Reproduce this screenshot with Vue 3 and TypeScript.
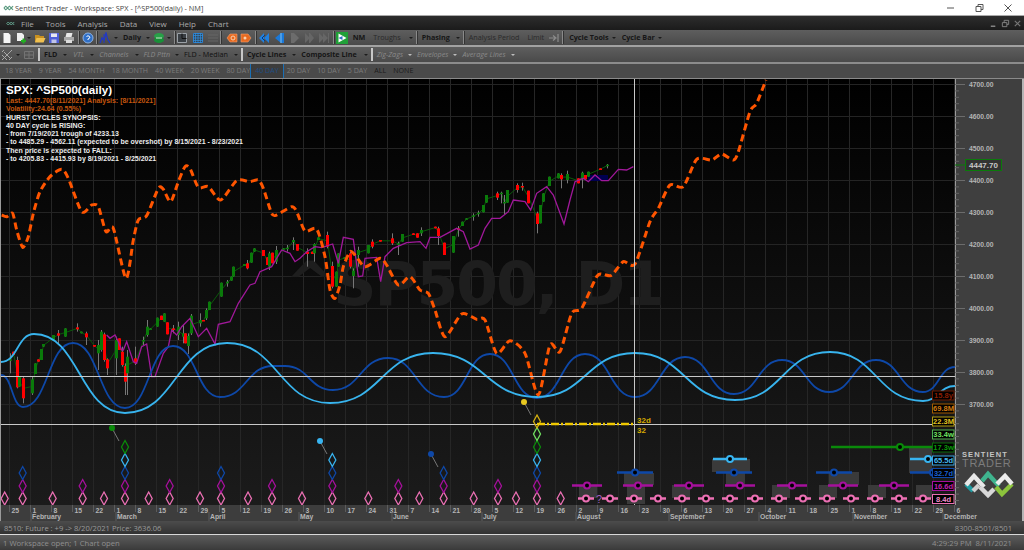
<template>
  <div class="app">
    <div class="titlebar">
      <svg class="logo-small" viewBox="0 0 12 8"><path d="M1 4 3 2 5 4 7 2 9 4 11 2M1 4 3 6 5 4 7 6 9 4 11 6" fill="none" stroke="#5a9a80" stroke-width="1.2"/></svg>
      <span class="title">Sentient Trader - Workspace: SPX - [^SP500(daily) - NM]</span>
      <div class="win-btns">
        <svg viewBox="0 0 10 10"><path d="M2 5h7" stroke="#555" stroke-width="1"/></svg>
        <svg viewBox="0 0 10 10"><path d="M2 3.5h5v5h-5zM4 3.5v-2h5v5h-2" fill="none" stroke="#555"/></svg>
        <svg viewBox="0 0 10 10"><path d="M1.5 1.5l7 7M8.5 1.5l-7 7" stroke="#555"/></svg>
      </div>
    </div>

    <div class="menubar">
      <svg class="menu-logo" viewBox="0 0 12 8"><path d="M1 4 3 2 5 4 7 2 9 4 11 2M1 4 3 6 5 4 7 6 9 4 11 6" fill="none" stroke="#6fb8a0" stroke-width="1.1"/></svg>
      <span v-for="m in menus" :key="m" class="menu-item">{{ m }}</span>
      <div class="mdi-btns">
        <svg viewBox="0 0 10 10"><path d="M2 8h5" stroke="#999" stroke-width="1.4"/></svg>
        <svg viewBox="0 0 10 10"><path d="M1.5 4h5v4.500h-5zM3.500 4v-2.500h5v4.500h-2" fill="none" stroke="#888"/></svg>
        <svg viewBox="0 0 10 10"><path d="M2 2l6 6M8 2l-6 6" stroke="#777" stroke-width="1.3"/></svg>
      </div>
    </div>

    <div class="toolbar t1">
      <template v-for="(it, i) in bar1" :key="i">
        <span v-if="it.t === 'sep'" class="sep" :style="{ marginLeft: it.l + 'px' }"></span>
        <span v-else-if="it.t === 'dd'" class="dd" :style="{ marginLeft: it.l + 'px' }"></span>
        <svg v-else-if="it.t === 'ic'" class="ic" :style="{ marginLeft: it.l + 'px' }" viewBox="0 0 12 12" v-html="icons[it.n!]"></svg>
        <span v-else class="lbl" :class="it.c" :style="{ marginLeft: it.l + 'px' }">{{ it.n }}</span>
      </template>
    </div>

    <div class="toolbar t2">
      <template v-for="(it, i) in bar2" :key="i">
        <span v-if="it.t === 'sep'" class="sep light" :style="{ marginLeft: it.l + 'px' }"></span>
        <span v-else-if="it.t === 'dd'" class="dd" :class="it.c" :style="{ marginLeft: it.l + 'px' }"></span>
        <svg v-else-if="it.t === 'ic'" class="ic" :style="{ marginLeft: it.l + 'px' }" viewBox="0 0 12 12" v-html="icons[it.n!]"></svg>
        <span v-else class="lbl" :class="it.c" :style="{ marginLeft: it.l + 'px' }">{{ it.n }}</span>
      </template>
    </div>

    <div class="toolbar t3">
      <span v-for="c in cycles" :key="c" class="cycle" :class="{ active: c === '40 DAY', on: c === 'ALL' || c === 'NONE' }">{{ c }}</span>
    </div>

    <div class="chart">
      <svg class="plot" width="1024" height="442" viewBox="0 79 1024 442">
        <defs>
          <linearGradient id="bg" x1="0" y1="0" x2="0" y2="1">
            <stop offset="0" stop-color="#000" />
            <stop offset="1" stop-color="#1b1b1b" />
          </linearGradient>
        </defs>
        <rect x="0" y="79" width="955" height="426" fill="url(#bg)" />

        <path v-for="k in weeks" :key="'g' + k.x" :d="`M${k.x} 79V505`" stroke="#262626" stroke-width="1" />
        <path v-for="p in prices" :key="'h' + p.v" :d="`M1 ${p.y}H955`" stroke="#242424" stroke-width="1" />

        <text x="285" y="305" class="watermark" textLength="380" lengthAdjust="spacing">^SP500, D1</text>

        <polyline :points="closeLine" fill="none" stroke="#0a5a0a" stroke-width="1" />
        <rect x="588" y="175" width="20" height="6" fill="#000050" />
        <g v-for="(c, i) in candles" :key="'c' + i">
          <path :d="`M${c.x} ${c.wt}V${c.wb}`" stroke="#777" stroke-width="1" />
          <rect :x="c.x - 1.5" :y="c.t" width="3" :height="c.h" :fill="c.fill" />
        </g>

        <polyline :points="purple" fill="none" stroke="#a0189a" stroke-width="1.3" />

        <path :d="darkWave" fill="none" stroke="#0e48a8" stroke-width="1.8" />
        <path :d="lightWave" fill="none" stroke="#38b4ee" stroke-width="1.8" />
        <path :d="orange" fill="none" stroke="#ff5500" stroke-width="3" stroke-dasharray="7 4" />

        <path d="M634.500 79V505" stroke="#c8c8c8" stroke-width="1" />
        <path d="M1 376.500H955M1 424.500H959" stroke="#c8c8c8" stroke-width="1" />

        <!-- past troughs -->
        <path v-for="(d, i) in diamonds" :key="'d' + i" :d="`M${d.x} ${d.y - 6.5}L${d.x + 3.5} ${d.y}L${d.x} ${d.y + 6.5}L${d.x - 3.5} ${d.y}Z`" fill="none" :stroke="d.col" stroke-width="1.3" />
        <g v-for="p in pins" :key="'p' + p.x">
          <path :d="`M${p.x + 1} ${p.y + 2}L${p.x + 7} ${p.y + 13}`" stroke="#777" stroke-width="1" />
          <circle :cx="p.x" :cy="p.y" r="3" :fill="p.col" />
        </g>

        <path d="M537 424H634" stroke="#f0c800" stroke-width="2.500" stroke-dasharray="8 2 2 2" />
        <text x="637" y="423" class="y-lbl">32d</text>
        <text x="637" y="433" class="y-lbl">32</text>

        <!-- future bands -->
        <rect v-for="(b, i) in bands" :key="'b' + i" :x="b[0]" :y="b[1]" :width="b[2]" :height="b[3]" fill="#3a3a3a" />
        <g v-for="(m, i) in markers" :key="'m' + i">
          <path :d="`M${m.x - m.w} ${m.y}H${m.x + m.w}`" :stroke="m.col" stroke-width="2.500" />
          <circle :cx="m.x" :cy="m.y" r="3" fill="#000" :stroke="m.col" stroke-width="2" />
        </g>
        <text x="596" y="503" class="qm">?</text>

        <!-- price axis -->
        <rect x="955" y="79" width="67" height="442" fill="#3f3f3f" />
        <rect x="1022" y="79" width="2" height="442" fill="#b5b5b5" />
        <path d="M955.500 79V505" stroke="#9a9a9a" stroke-width="1" />
        <path d="M0.500 79V521" stroke="#9a9a9a" stroke-width="1" />
        <path v-for="t in minorTicks" :key="'t' + t" :d="`M955 ${t}H959`" stroke="#666" stroke-width="1" />
        <g v-for="p in prices" :key="'a' + p.v">
          <path :d="`M955 ${p.y}H965`" stroke="#6c6c6c" stroke-width="1" />
          <text x="969" :y="p.y + 2.5" class="ax">{{ p.v }}.00</text>
        </g>
        <path d="M955 165H965" stroke="#0a7a0a" stroke-width="1" />
        <rect x="965.500" y="159.500" width="36" height="11" fill="#333" stroke="#0a7a0a" />
        <text x="969" y="168" class="last">4447.70</text>

        <!-- cycle tags -->
        <g v-for="t in tags" :key="t.s">
          <rect x="932.500" :y="t.y + 0.5" width="21.500" height="9" fill="#000" :stroke="t.b" stroke-width="1" />
          <text x="943.500" :y="t.y + 7.5" text-anchor="middle" class="tag" :fill="t.c">{{ t.s }}</text>
        </g>

        <!-- logo -->
        <text x="962" y="456.500" class="logo-a">SENTIENT</text>
        <text x="962" y="467" class="logo-b">TRADER</text>
        <g fill="none" stroke-width="4.500" stroke-linejoin="miter">
          <path d="M966 484l7 7" stroke="#1e9aa0" />
          <path d="M966 485l8-9 10 11" stroke="#e8e8e8" />
          <path d="M973 491l6-6" stroke="#cfcfcf" />
          <path d="M980 487l8 8 6-6" stroke="#d8d8d8" />
          <path d="M982 481l6-7 11 12" stroke="#3fb48e" />
          <path d="M996 487l6 7 10-10" stroke="#8cc43c" />
          <path d="M997 484l8-8 7 8" stroke="#ececec" />
        </g>

        <!-- time axis -->
        <rect x="1" y="505" width="954" height="16" fill="#3d3d3d" />
        <g v-for="k in weeks" :key="'w' + k.x">
          <path :d="`M${k.x} 505V512`" stroke="#5c5c5c" stroke-width="1" />
          <text :x="k.x + 2" y="512.500" class="ax">{{ k.s }}</text>
        </g>
        <g v-for="m in months" :key="m.s">
          <path :d="`M${m.x - 1} 512V521`" stroke="#5c5c5c" stroke-width="1" />
          <text :x="m.x" y="519" class="ax">{{ m.s }}</text>
        </g>
      </svg>

      <div class="synopsis">
        <div class="head">SPX: ^SP500(daily)</div>
        <div class="warn first">Last: 4447.70[8/11/2021] Analysis: [8/11/2021]</div>
        <div class="warn">Volatility:24.64 (0.55%)</div>
        <div>HURST CYCLES SYNOPSIS:</div>
        <div>40 DAY cycle is RISING:</div>
        <div>- from 7/19/2021 trough of 4233.13</div>
        <div>- to 4485.29 - 4562.11 (expected to be overshot) by 8/15/2021 - 8/23/2021</div>
        <div>Then price is expected to FALL:</div>
        <div>- to 4205.83 - 4415.93 by 8/19/2021 - 8/25/2021</div>
      </div>
    </div>

    <div class="docstatus">
      <span>8510: Future : +9 -&gt; 8/20/2021 Price: 3636.06</span>
      <span>8300-8501/8501</span>
    </div>
    <div class="statusbar">
      <span>1 Workspace open; 1 Chart open</span>
      <span>4:29:29 PM&nbsp; 8/11/2021</span>
    </div>
  </div>
</template>

<script setup lang="ts">
interface BarItem {
  t: 'sep' | 'dd' | 'ic' | 'lbl'
  n?: string
  c?: string
  l?: number
}

const menus = ['File', 'Tools', 'Analysis', 'Data', 'View', 'Help', 'Chart']

const icons: Record<string, string> = {
  doc: '<path d="M2.500 1h5l2 2v8h-7z" fill="#f4f4f4"/>',
  newc: '<path d="M2 1h5l2 2v6h-7z" fill="#f0f0f0"/><path d="M8.500 6.500v5M6 9h5" stroke="#22b022" stroke-width="2"/>',
  open: '<path d="M1 3h4l1 1h4v6h-9z" fill="#c89020"/><path d="M2.500 6h9l-2 4.500h-8.500z" fill="#f0c050"/>',
  save: '<path d="M1 1h10v10h-10z" fill="#5060d8"/><path d="M3 1.500h6v3.500h-6z" fill="#e8e8f0"/><path d="M3.500 7.500h5v3.500h-5z" fill="#c0c4e8"/>',
  print: '<path d="M3.500 1h6l-1 4h-6z" fill="#e8e8e8"/><path d="M1 5h10v4h-10z" fill="#a8a8a8"/><path d="M3 8h6v3h-6z" fill="#dcdcdc"/>',
  help: '<circle cx="6" cy="6" r="5" fill="#3070c8" stroke="#8fb4e4" stroke-width="1"/><path d="M4.500 4.500q1.500-1.500 3 0t-1.500 2.500v1" fill="none" stroke="#fff" stroke-width="1"/>',
  wave: '<path d="M1 11l2-5 2 2 2-7 1.500 6 2.500 4" fill="none" stroke="#2038c8" stroke-width="1.300"/><path d="M5 2v9" stroke="#2038c8"/>',
  sync: '<ellipse cx="6" cy="4" rx="5" ry="3" fill="#28a048"/><ellipse cx="6" cy="8" rx="5" ry="3" fill="#189038"/><path d="M3 6h6" stroke="#d0f0d0"/>',
  box: '<path d="M1.500 1.500h9v9h-9z" fill="#3a3f44" stroke="#9aa0a6"/><path d="M6 1.500v5h4.500" fill="none" stroke="#111"/>',
  grid: '<path d="M1.500 1.500h9v9h-9z" fill="#345" stroke="#2a80d0"/><path d="M6 1v10M1 6h10M3.500 1v10M8.500 1v10M1 3.500h10M1 8.500h10" stroke="#3090e0" stroke-width=".7"/>',
  lines: '<path d="M1 3h10M1 6h10M1 9h10" stroke="#666"/>',
  ora1: '<path d="M1 6l3-4h7v8h-7z" fill="#e86a20" stroke="#f0a070" stroke-width=".6"/><circle cx="7" cy="6" r="2" fill="none" stroke="#f8d0b0"/>',
  ora2: '<path d="M11 6l-3-4h-7v8h7z" fill="#e86a20" stroke="#f0a070" stroke-width=".6"/><circle cx="5" cy="6" r="1.500" fill="#f8d0b0"/>',
  blueL: '<path d="M6 1l-5 5 5 5zM11 1l-5 5 5 5z" fill="#2080e0"/><path d="M7 3l-3 3 3 3" fill="none" stroke="#0a3a78"/>',
  blueM: '<path d="M8 1l-6 5 6 5h3v-10z" fill="#1a78d8"/><path d="M8 1v10" stroke="#7fc0f0"/>',
  gr1: '<path d="M2 1h3l5 5-5 5h-3z" fill="#6c6c6c"/>',
  gr2: '<path d="M2 1l5 5-5 5zM6 1h1l4 5-4 5h-1z" fill="#666"/>',
  gr3: '<path d="M1 1l5 5-5 5zM5 1l5 5-5 5z" fill="#666"/><path d="M10.500 1v10" stroke="#666"/>',
  nm: '<path d="M0 0h12v12h-12z" fill="#20a038"/><path d="M2.500 1.500l8 4.500-8 4.500z" fill="#fff"/><path d="M2.500 6l4-2v4z" fill="#3070c0"/>',
  limit: '<path d="M1 6h6M5 3.500l3 2.500-3 2.500M10 2v8" fill="none" stroke="#8c8c8c" stroke-width="1.200"/>',
  axes: '<path d="M1 11l10-10M1 6l5 5M3 3l7 7M1 3l2-2M8 11l3-3" stroke="#a8a8a8" stroke-width="1"/>',
  panel: '<path d="M1.500 2.500h9v7h-9zM1.500 6h9M6 2.500v7" fill="none" stroke="#747474"/>'
}

const ic = (n: string, l = 0): BarItem => ({ t: 'ic', n, l })
const dd = (l = 0, c = ''): BarItem => ({ t: 'dd', l, c })
const sep = (l = 0): BarItem => ({ t: 'sep', l })
const lbl = (n: string, c: string, l = 0): BarItem => ({ t: 'lbl', n, c, l })

const bar1: BarItem[] = [
  ic('doc', 1), ic('newc', 2), dd(0), ic('open', 3), ic('save', 2), ic('print', 3), sep(3), ic('help', 2), sep(2),
  ic('wave', 1), dd(3), lbl('Daily', 'bold', 5), dd(4.5), ic('sync', 3), dd(2), sep(3), ic('box', 0), ic('grid', 4), ic('lines', 3), sep(1),
  ic('ora1', 4), ic('ora2', 2), sep(3), ic('blueL', 1), ic('blueM', 3), ic('gr1', 4), ic('gr2', 2), ic('gr3', 3), sep(3),
  ic('nm', 1), lbl('NM', 'bold', 5), lbl('Troughs', 'dim', 8), dd(8), sep(3), lbl('Phasing', 'bold', 4), dd(6), sep(3),
  lbl('Analysis Period', 'dim', 4), lbl('Limit', 'dim', 8), ic('limit', 4), sep(2), lbl('Cycle Tools', 'bold', 5), dd(3), lbl('Cycle Bar', 'bold', 6), dd(3)
]

const bar2: BarItem[] = [
  ic('axes', 1), dd(3), ic('panel', 3), sep(3), lbl('FLD', 'bold', 4), dd(6), lbl('VTL', 'ital', 6), dd(6), lbl('Channels', 'ital', 5), dd(6),
  lbl('FLD Pttn', 'ital', 5), dd(5), lbl('FLD - Median', 'mid', 5), dd(6), sep(3), lbl('Cycle Lines', 'bold', 4), dd(6), lbl('Composite Line', 'bold', 5), dd(7), sep(3),
  lbl('Zig-Zags', 'ital', 4), dd(5, 'pale'), lbl('Envelopes', 'ital', 5), dd(5, 'pale'), lbl('Average Lines', 'ital', 5), dd(5, 'pale')
]

const cycles = ['18 YEAR', '9 YEAR', '54 MONTH', '18 MONTH', '40 WEEK', '20 WEEK', '80 DAY', '40 DAY', '20 DAY', '10 DAY', '5 DAY', 'ALL', 'NONE']

const weekLabels = [25, 1, 8, 15, 22, 1, 8, 15, 22, 29, 5, 12, 19, 26, 3, 10, 17, 24, 31, 7, 14, 21, 28, 5, 12, 19, 26, 2, 9, 16, 23, 30, 6, 13, 20, 27, 4, 11, 18, 25, 1, 8, 15, 22, 29, 6]
const weeks = weekLabels.map((s, i) => ({ s, x: 9.5 + 21 * i }))

const months = [
  { s: 'February', x: 32 }, { s: 'March', x: 117 }, { s: 'April', x: 210 }, { s: 'May', x: 300 }, { s: 'June', x: 393 }, { s: 'July', x: 483 },
  { s: 'August', x: 577 }, { s: 'September', x: 670 }, { s: 'October', x: 760 }, { s: 'November', x: 854 }, { s: 'December', x: 944 }
]

const prices = Array.from({ length: 11 }, (_, i) => ({ v: 4700 - i * 100, y: 84.5 + i * 32 }))
const minorTicks = Array.from({ length: 66 }, (_, i) => 84.5 + i * 6.4)

// zoomed coords of the two chart crops back to screen px
const fromA = (p: number[]) => [p[0] / 3, 150 + p[1] / 3]
const fromB = (p: number[]) => [340 + p[0] / 3, 150 + p[1] / 3]
const fromC = (p: number[]) => [640 + p[0] / 3, 80 + p[1] / 3]

const orangePts = [
  ...[[5, 195], [20, 200], [38, 190], [50, 240], [68, 292], [85, 260], [100, 190], [120, 125], [150, 80], [185, 58], [205, 85], [245, 185], [275, 165], [295, 170], [318, 245], [340, 235], [378, 385], [400, 270], [415, 210], [440, 197], [475, 115], [490, 118], [512, 155], [535, 95], [555, 50], [570, 55], [595, 112], [625, 110], [662, 150], [710, 92], [750, 95], [775, 90], [790, 115], [815, 190], [830, 195], [875, 170], [890, 185], [915, 243], [950, 237], [975, 320], [990, 420], [1005, 445]].map(fromA),
  ...[[0, 405], [10, 350], [30, 305], [45, 315], [75, 350], [120, 325], [140, 345], [175, 405], [210, 380], [240, 420], [265, 430], [285, 480], [315, 560], [365, 492], [410, 508], [435, 510], [470, 610], [510, 572], [555, 610], [595, 735], [630, 585], [660, 605], [695, 490], [725, 475], [770, 380], [790, 373], [815, 376], [850, 335], [885, 342]].map(fromB),
  ...[[30, 425], [55, 385], [90, 315], [130, 320], [170, 238], [215, 240], [245, 222], [280, 240], [295, 215], [330, 95], [350, 70], [378, 0]].map(fromC)
]

function smooth(pts: number[][]): string {
  let d = `M${pts[0][0]} ${pts[0][1]}`
  for (let i = 0; i < pts.length - 1; i++) {
    const p0 = pts[i - 1] || pts[i]
    const p1 = pts[i]
    const p2 = pts[i + 1]
    const p3 = pts[i + 2] || p2
    d += `C${p1[0] + (p2[0] - p0[0]) / 8} ${p1[1] + (p2[1] - p0[1]) / 8} ${p2[0] - (p3[0] - p1[0]) / 8} ${p2[1] - (p3[1] - p1[1]) / 8} ${p2[0]} ${p2[1]}`
  }
  return d
}

// sine-like wave through its highs and lows
function wave(pts: number[][]): string {
  let d = `M${pts[0][0]} ${pts[0][1]}`
  for (let i = 0; i < pts.length - 1; i++) {
    const [x0, y0] = pts[i]
    const [x1, y1] = pts[i + 1]
    const mx = (x0 + x1) / 2
    d += `C${mx} ${y0} ${mx} ${y1} ${x1} ${y1}`
  }
  return d
}

const orange = smooth(orangePts)
const lightWave = wave([[1, 362], [34, 334], [125, 413], [227, 343], [330, 403], [433, 353], [537, 397], [635, 353], [735, 400], [830, 352], [923, 401], [955, 386]])
const darkWave = wave([[1, 375], [23, 407], [73, 343], [125, 408], [173, 346], [220, 397], [273, 366], [285, 366], [333, 390], [388, 358], [444, 397], [490, 354], [537, 398], [585, 354], [635, 397], [685, 357], [734, 394], [782, 360], [829, 392], [876, 360], [923, 392], [955, 367]])

const toPoints = (a: number[][]) => a.map(p => `${p[0]},${p[1]}`).join(' ')

const purple = toPoints([
  ...[[320, 555], [330, 565], [345, 555], [355, 575], [365, 600], [370, 600], [380, 575], [400, 635], [410, 640], [425, 590], [440, 582], [455, 680], [465, 680], [490, 610], [505, 590], [515, 540], [530, 555], [545, 530], [570, 505], [595, 560], [620, 535], [645, 582], [655, 523], [690, 515], [715, 460], [750, 405], [765, 400], [780, 365], [815, 350], [845, 300], [870, 310], [885, 335], [900, 325], [920, 305], [945, 290], [965, 293], [998, 282], [1015, 340]].map(fromA),
  ...[[10, 262], [40, 268], [55, 380], [68, 378], [75, 325], [110, 322], [122, 395], [135, 320], [160, 295], [200, 278], [240, 275], [258, 295], [270, 262], [300, 262], [350, 235], [370, 245], [390, 297], [415, 285], [435, 235], [455, 205], [480, 205], [505, 185], [520, 150], [555, 155], [572, 180], [590, 130], [620, 110], [640, 135], [672, 222], [690, 150], [705, 95], [730, 85], [745, 95], [765, 75], [785, 92], [805, 92], [835, 58], [860, 60], [880, 50]].map(fromB)
])

// x, body top, body bottom, colour (1 green, 0 red), wick top, wick bottom
type Row = [number, number, number, number, number?, number?]
const rowsA: Row[] = [
  [30, 628, 632, 1, 610, 670], [40, 605, 615, 0], [50, 630, 712, 0, 620, 715], [58, 680, 710, 1], [68, 685, 745, 0, 680, 760], [95, 688, 730, 1, 680, 735], [104, 640, 672, 1], [113, 628, 635, 0], [122, 597, 630, 1], [130, 582, 590, 1], [158, 555, 572, 1], [175, 550, 557, 0, 540, 585], [195, 535, 560, 1], [232, 532, 538, 0, 520, 545], [243, 545, 550, 1], [258, 550, 562, 0, 545, 585], [283, 585, 590, 0], [293, 585, 610, 1, 570, 660], [303, 545, 600, 1, 540, 605], [312, 553, 630, 0, 548, 635], [322, 628, 655, 0, 625, 675], [348, 570, 625, 1, 560, 675], [356, 565, 600, 0], [365, 605, 645, 0, 590, 650], [375, 648, 695, 0, 640, 735], [382, 620, 670, 1, 600, 735], [405, 625, 640, 0, 590, 645], [430, 570, 575, 1, 560, 585], [440, 530, 555, 1, 510, 560], [450, 535, 540, 1], [472, 503, 530, 1], [483, 497, 510, 0], [492, 490, 515, 1], [502, 517, 553, 0], [520, 535, 540, 0, 525, 550], [535, 530, 555, 1, 515, 570], [548, 550, 560, 1, 525, 580], [556, 550, 580, 0], [563, 558, 588, 1, 550, 612], [573, 497, 550, 1, 492, 555], [600, 510, 520, 1, 490, 530], [608, 510, 513, 0], [618, 480, 505, 1, 475, 510], [627, 455, 480, 1], [662, 398, 440, 1], [682, 395, 400, 1, 390, 410], [692, 380, 392, 1], [700, 350, 380, 1], [733, 342, 348, 1], [742, 340, 355, 0, 330, 358], [752, 308, 338, 1], [763, 295, 305, 1], [790, 300, 318, 0], [800, 322, 345, 0], [808, 310, 350, 1, 305, 360], [817, 308, 340, 0], [827, 300, 335, 1, 288, 342], [850, 295, 298, 1], [860, 293, 296, 1, 285, 305], [880, 270, 276, 1, 262, 300], [890, 282, 302, 0], [922, 305, 312, 0, 295, 350], [935, 305, 312, 0], [943, 282, 310, 1, 280, 335], [955, 262, 270, 1], [980, 255, 290, 0, 245, 295], [997, 348, 410, 0, 335, 415], [1007, 365, 410, 1], [1015, 310, 350, 1]
]
const rowsB: Row[] = [
  [12, 322, 326, 1], [30, 310, 350, 0, 305, 355], [40, 362, 378, 1, 355, 415], [55, 300, 315, 1, 290, 350], [85, 285, 310, 1], [95, 275, 290, 0, 268, 295], [120, 270, 275, 0], [157, 265, 280, 0, 250, 285], [175, 280, 285, 1, 275, 315], [185, 252, 275, 1], [220, 250, 255, 0], [230, 250, 263, 0], [243, 240, 250, 1, 232, 258], [285, 230, 235, 0], [295, 235, 258, 0, 230, 285], [312, 278, 315, 0], [340, 258, 308, 1], [355, 235, 240, 0, 228, 260], [365, 215, 228, 1], [378, 205, 208, 1], [400, 196, 200, 1, 190, 212], [415, 188, 192, 1, 182, 200], [428, 165, 187, 1], [438, 135, 158, 1], [472, 130, 143, 0, 125, 150], [482, 128, 132, 1, 125, 160], [491, 156, 160, 1, 135, 192], [502, 120, 158, 1], [530, 105, 120, 0, 100, 128], [545, 108, 112, 0, 98, 122], [565, 122, 160, 0], [590, 190, 222, 0, 185, 250], [600, 165, 220, 1], [610, 130, 155, 1], [628, 80, 108, 1], [655, 70, 85, 1], [662, 75, 88, 0, 70, 115], [682, 72, 90, 1, 62, 100], [715, 85, 100, 0], [725, 68, 88, 1, 65, 115], [735, 75, 88, 0], [745, 65, 80, 1], [780, 55, 60, 0], [800, 44, 48, 1, 42, 55]
]

const candles = [
  ...rowsA.map(r => mapCandle(r, fromA)),
  ...rowsB.map(r => mapCandle(r, fromB))
]

function mapCandle(r: Row, f: (p: number[]) => number[]) {
  const [x, t] = f([r[0], r[1]])
  const b = f([r[0], r[2]])[1]
  return {
    x: Math.round(x) + 0.5,
    t,
    h: Math.max(b - t, 1.5),
    fill: r[3] ? '#0a7a0a' : '#ff0000',
    wt: r[4] !== undefined ? f([0, r[4]])[1] : t,
    wb: r[5] !== undefined ? f([0, r[5]])[1] : b
  }
}

const closeLine = toPoints(candles.slice().sort((a, b) => a.x - b.x).map(c => [c.x, c.t + c.h / 2]))

const PINK = '#ec70b4'
const PURP = '#a6109c'
const DBLUE = '#0e48a8'
const LBLUE = '#38b4f0'
const GREEN = '#0a8a0a'
const LIME = '#70e060'
const YEL = '#d4b010'

const row = (xs: number[], y: number, col: string) => xs.map(x => ({ x, y, col }))
const xA = (zs: number[]) => zs.map(z => z / 3)
const xB = (zs: number[]) => zs.map(z => 340 + z / 3)

const diamonds = [
  ...row([...xA([14, 68, 158, 248, 312, 375, 446, 509, 600, 663, 744, 816, 906, 997]), ...xB([85, 175, 238, 311, 401, 474, 528, 591, 662])], 498.5, PINK),
  ...row([...xA([68, 248, 375, 509, 663, 816, 997]), ...xB([175, 311, 474, 591])], 486, PURP),
  ...row([...xA([68, 375, 663, 997]), ...xB([311, 591])], 473, DBLUE),
  ...row([...xA([375, 997]), ...xB([591])], 460, LBLUE),
  ...row([...xA([375]), ...xB([591])], 447, GREEN),
  ...row(xB([591]), 434, LIME),
  ...row(xB([591]), 421.5, YEL)
]

const pins = [
  { x: 112, y: 428, col: '#0a8a0a' },
  { x: 320, y: 441, col: '#38b4f0' },
  { x: 431, y: 454, col: '#0e48a8' },
  { x: 524, y: 402, col: '#e8c820' }
]

const bands = [
  [579, 485, 18, 13], [624, 473, 30, 12], [627, 485, 18, 19], [712, 459, 38, 13], [726, 472, 19, 13], [672, 485, 18, 13], [772, 485, 18, 13],
  [829, 472, 30, 13], [819, 485, 18, 13], [868, 485, 18, 13], [916, 485, 16, 13], [909, 448, 23, 25]
]

const markers = [
  ...[586, 610, 634, 658, 682, 706, 730, 755, 779, 803, 827, 851, 875, 899, 923].map(x => ({ x, y: 498.5, w: 8, col: PINK })),
  ...[587, 638, 689, 740, 792, 843, 894].map(x => ({ x, y: 485.5, w: 15, col: PURP })),
  ...[635, 734, 834].map(x => ({ x, y: 472.5, w: 18, col: DBLUE })),
  { x: 933, y: 472.5, w: 23, col: DBLUE },
  { x: 730, y: 459, w: 17, col: LBLUE },
  { x: 928, y: 459, w: 18, col: LBLUE },
  { x: 900, y: 447, w: 69, col: GREEN }
]

const tags = [
  { s: '15.8y', y: 390.5, b: '#6a1a00', c: '#8a1e00' },
  { s: '69.8M', y: 403.5, b: '#a05a00', c: '#d07a10' },
  { s: '22.3M', y: 416.5, b: '#b09a10', c: '#e0c020' },
  { s: '33.4w', y: 429.5, b: '#50b050', c: '#70e060' },
  { s: '17.3w', y: 442.5, b: '#0a6a0a', c: '#0a9a0a' },
  { s: '65.5d', y: 455.5, b: '#38a4e0', c: '#48bcf4' },
  { s: '32.7d', y: 468, b: '#0e48a8', c: '#1a60d0' },
  { s: '16.6d', y: 481, b: '#a6109c', c: '#c020b0' },
  { s: '8.4d', y: 494, b: '#ec70b4', c: '#f090c8' }
]
</script>

<style>
html,
body {
  margin: 0;
  background: #000;
}
</style>

<style scoped>
.app {
  width: 1024px;
  height: 550px;
  display: flex;
  flex-direction: column;
  overflow: hidden;
  font-family: "Open Sans", "Liberation Sans", sans-serif;
  background: #333;
}
.titlebar {
  height: 15px;
  background: #fff;
  display: flex;
  align-items: center;
  flex: none;
}
.logo-small {
  width: 11px;
  height: 8px;
  margin-left: 3px;
}
.title {
  margin-left: 1px;
  font-size: 7.350px;
  color: #444;
  white-space: nowrap;
}
.win-btns {
  margin-left: auto;
  display: flex;
  gap: 19px;
  margin-right: 11px;
}
.win-btns svg {
  width: 10px;
  height: 10px;
}
.menubar {
  height: 15px;
  flex: none;
  background: linear-gradient(#2d2d2d, #1b1b1b);
  display: flex;
  align-items: center;
  border-top: 1px solid #aaa;
  box-sizing: border-box;
  padding-left: 6px;
}
.menu-logo {
  width: 9px;
  height: 7px;
  margin-right: 6px;
}
.menu-item {
  font-size: 8px;
  color: #aaa;
  margin-right: 12px;
}
.mdi-btns {
  margin-left: auto;
  display: flex;
  gap: 3px;
  margin-right: 2px;
}
.mdi-btns svg {
  width: 9px;
  height: 9px;
}
.toolbar {
  flex: none;
  display: flex;
  align-items: center;
  background: linear-gradient(#5e5e5e, #4a4a4a);
  border-bottom: 2px solid #a2a2a2;
  box-sizing: border-box;
  white-space: nowrap;
  overflow: hidden;
}
.t1 {
  height: 17px;
}
.t2 {
  height: 17px;
  border-bottom-color: #8c8c8c;
}
.t3 {
  height: 15px;
  gap: 7px;
  padding-left: 5px;
  background: #4a4a4a;
  border-bottom: 1px solid #8a8a8a;
}
.ic {
  width: 12px;
  height: 12px;
  flex: none;
}
.dd {
  flex: none;
  width: 0;
  height: 0;
  border-left: 2px solid transparent;
  border-right: 2px solid transparent;
  border-top: 2px solid #1c1c1c;
}
.dd.pale {
  border-top-color: #bdbdbd;
}
.sep {
  flex: none;
  width: 1px;
  height: 13px;
  background: #8a8a8a;
  border-right: 1px solid #333;
}
.sep.light {
  width: 2px;
  background: #c8c8c8;
  border-right: none;
}
.lbl {
  font-size: 7.200px;
  line-height: 1;
}
.lbl.bold {
  font-weight: 700;
  color: #161616;
}
.lbl.dim {
  color: #2a2a2a;
}
.lbl.mid {
  color: #111;
}
.lbl.ital {
  font-style: italic;
  color: #8a8a8a;
}
.cycle {
  font-size: 7.100px;
  color: #7c7c7c;
  line-height: 1;
}
.cycle.on {
  color: #1c1c1c;
}
.cycle.active {
  color: #1f4f86;
  background: #3c3c3c;
  outline: 1px solid #1a6fb5;
  padding: 3px 4px;
  margin: 0 -3px 0 -6px;
}
.chart {
  position: relative;
  height: 442px;
  flex: none;
}
.plot {
  display: block;
}
.plot text {
  font-family: "Liberation Sans", sans-serif;
}
.plot .watermark {
  font-family: "DejaVu Sans", sans-serif;
  font-size: 60px;
  font-weight: 700;
  fill: #1e1e1e;
}
.ax {
  font-size: 6.800px;
  font-weight: 700;
  fill: #b4b4b4;
}
.last {
  font-size: 8px;
  font-weight: 700;
  fill: #c8c8c8;
}
.tag {
  font-size: 7.500px;
  font-weight: 700;
}
.y-lbl {
  font-size: 8px;
  font-weight: 700;
  fill: #d4a800;
}
.qm {
  font-size: 11px;
  fill: #a060c0;
}
.logo-a {
  font-size: 7.500px;
  font-weight: 700;
  letter-spacing: 1.100px;
  fill: #c4c4c4;
}
.logo-b {
  font-size: 11px;
  letter-spacing: 0.700px;
  fill: #7c7c7c;
}
.synopsis {
  position: absolute;
  left: 6px;
  top: 4px;
  font-family: "Liberation Sans", sans-serif;
  font-size: 7px;
  font-weight: 700;
  line-height: 8.300px;
  color: #ececec;
  white-space: nowrap;
}
.head {
  font-size: 11.600px;
  line-height: 13px;
  color: #fff;
}
.warn {
  color: #c4560e;
}
.first {
  margin-top: 1px;
}
.docstatus {
  height: 14px;
  flex: none;
  background: linear-gradient(#4c4c4c, #323232);
  border-bottom: 1px solid #d8d8d8;
  box-sizing: border-box;
  display: flex;
  justify-content: space-between;
  align-items: center;
  padding: 0 12px 0 4px;
  font-size: 7.600px;
  color: #9a9a9a;
}
.statusbar {
  flex: 1;
  background: linear-gradient(#5c5c5c, #3a3a3a);
  display: flex;
  justify-content: space-between;
  align-items: center;
  padding: 0 12px 0 3px;
  font-size: 7.700px;
  color: #909090;
}
</style>
